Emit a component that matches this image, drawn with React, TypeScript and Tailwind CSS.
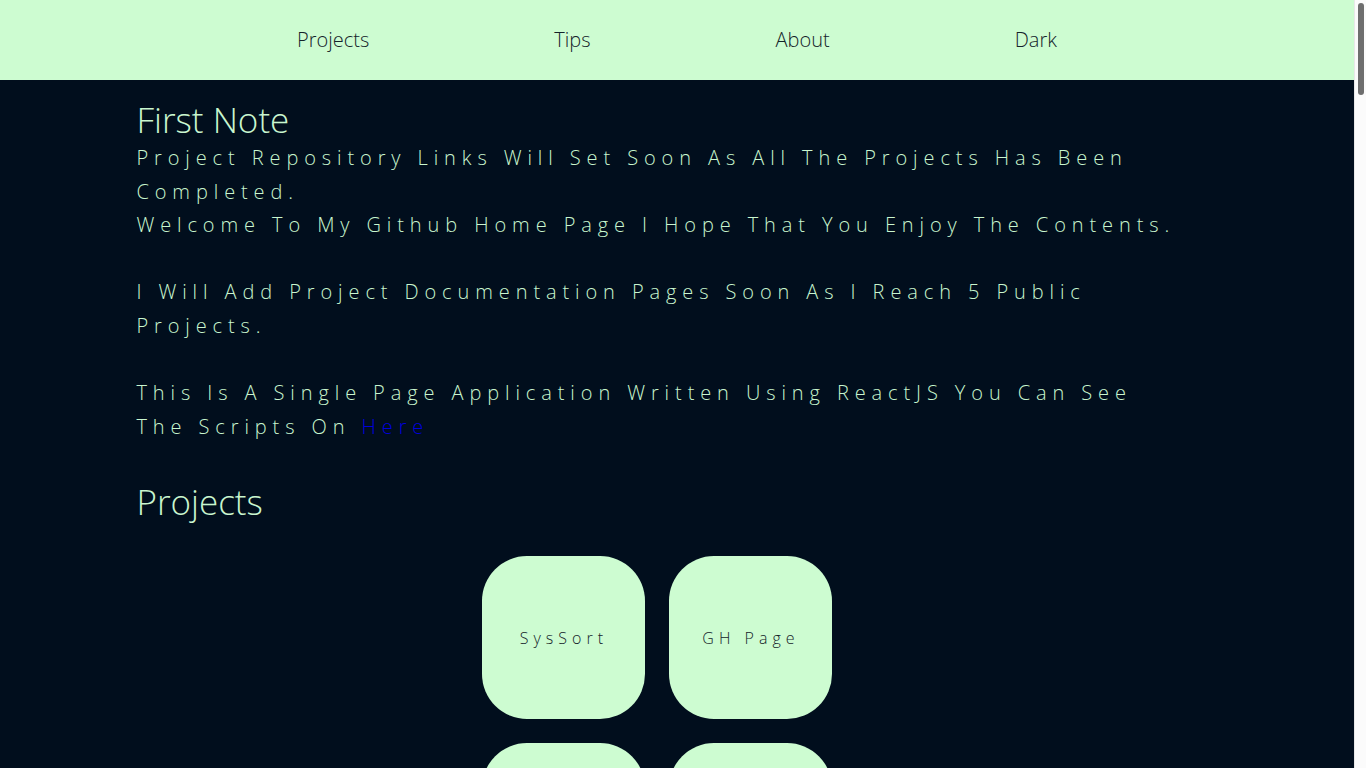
const navItems = ["Projects", "Tips", "About", "Dark"];

const projects = ["SysSort", "GH Page", "", ""];

export default function App() {
  return (
    <div className="flex h-screen bg-[#010e1d] font-['Open_Sans',sans-serif] font-light text-[#c9f6cf]">
      <div className="flex-1 overflow-hidden">
        {/* Top nav */}
        <nav className="flex h-20 items-center justify-center gap-[185px] bg-[#cdfcd1] text-[20px] text-[#14232a]">
          {navItems.map((item) => (
            <a key={item} href="#" className="leading-none">
              {item}
            </a>
          ))}
        </nav>

        <main className="mx-auto w-4/5 pb-10 pl-px">
          <h1 className="pt-[19px] text-[35px] leading-[42px]">First Note</h1>
          <p className="text-[20px] leading-[33.6px] tracking-[5.9px]">
            Project Repository Links Will Set Soon As All The Projects Has Been
            <br />
            Completed.
            <br />
            Welcome To My Github Home Page I Hope That You Enjoy The Contents.
            <br />
            <br />
            I Will Add Project Documentation Pages Soon As I Reach 5 Public
            <br />
            Projects.
            <br />
            <br />
            This Is A Single Page Application Written Using ReactJS You Can See
            <br />
            The Scripts On{" "}
            <a href="#" className="text-[#0000dd]">
              Here
            </a>
          </p>

          <h2 className="mt-[38px] text-[35px] leading-[42px]">Projects</h2>

          <div className="mt-[33px] grid w-fit grid-cols-[163px_163px] gap-6 pl-[346px]">
            {projects.map((name, i) => (
              <a
                key={i}
                href="#"
                className="flex h-[163px] items-center justify-center rounded-[45px] bg-[#cdfcd1] text-[16px] tracking-[5px] text-[#14232a]"
              >
                {name}
              </a>
            ))}
          </div>
        </main>
      </div>

      {/* page scrollbar */}
      <div className="w-3 shrink-0 border-l border-[#e8e8e8] bg-[#fbfbfb] pt-[3px]">
        <div className="mx-auto h-[92px] w-[6px] rounded-full bg-[#6e6e6e]" />
      </div>
    </div>
  );
}
